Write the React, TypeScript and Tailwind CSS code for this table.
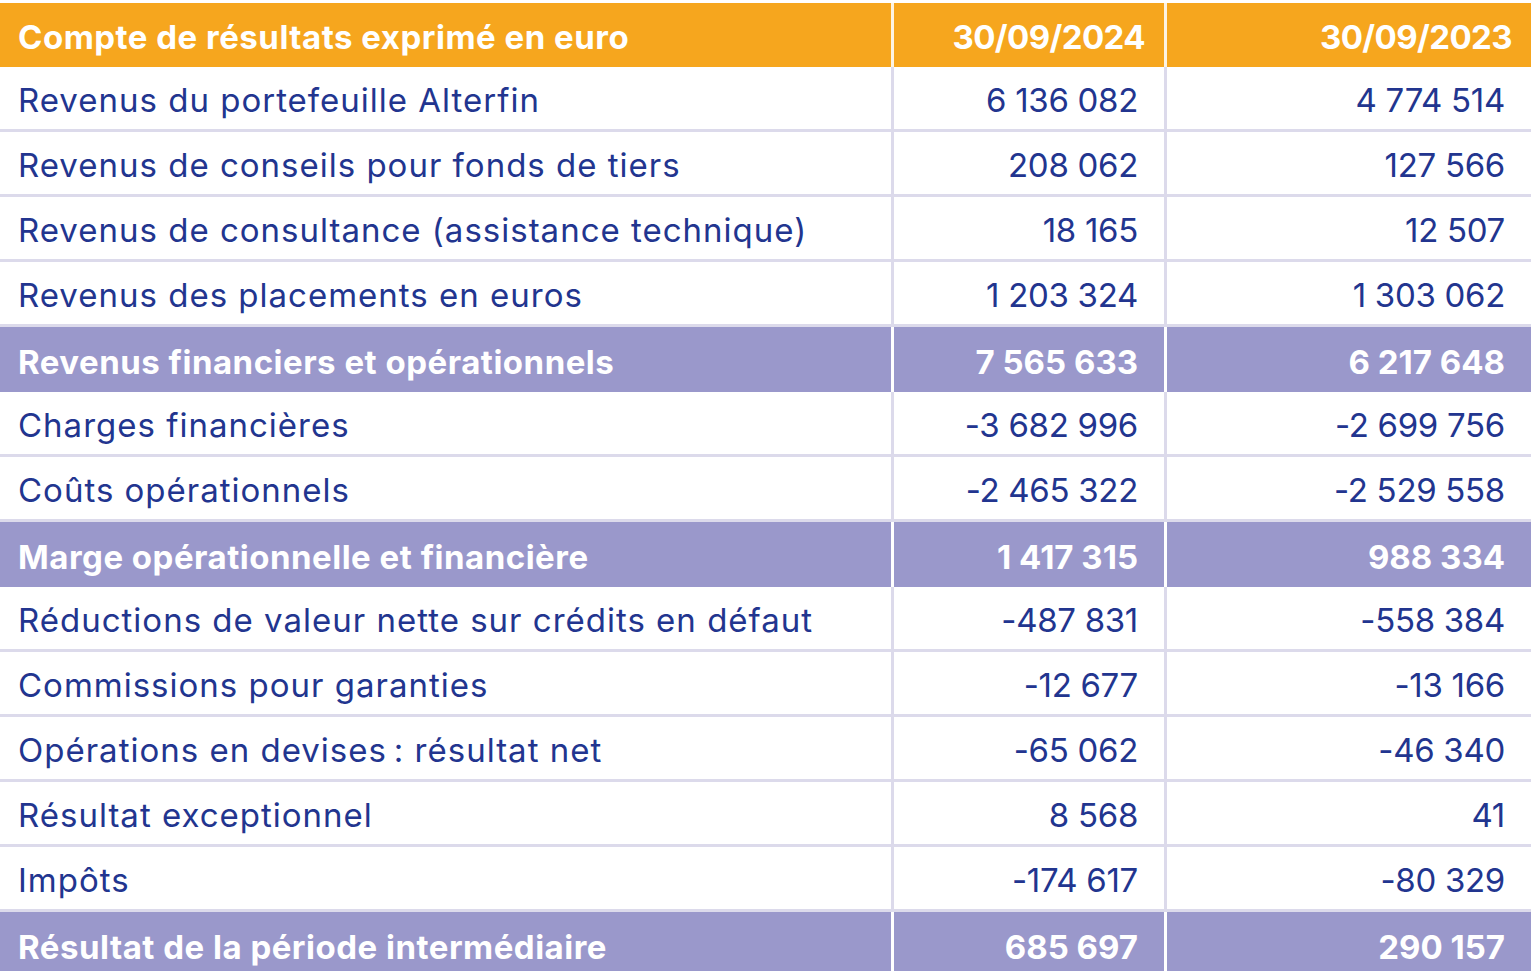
const rows: { label: string; a: string; b: string; total?: boolean }[] = [
  { label: "Revenus du portefeuille Alterfin", a: "6 136 082", b: "4 774 514" },
  { label: "Revenus de conseils pour fonds de tiers", a: "208 062", b: "127 566" },
  { label: "Revenus de consultance (assistance technique)", a: "18 165", b: "12 507" },
  { label: "Revenus des placements en euros", a: "1 203 324", b: "1 303 062" },
  { label: "Revenus financiers et opérationnels", a: "7 565 633", b: "6 217 648", total: true },
  { label: "Charges financières", a: "-3 682 996", b: "-2 699 756" },
  { label: "Coûts opérationnels", a: "-2 465 322", b: "-2 529 558" },
  { label: "Marge opérationnelle et financière", a: "1 417 315", b: "988 334", total: true },
  { label: "Réductions de valeur nette sur crédits en défaut", a: "-487 831", b: "-558 384" },
  { label: "Commissions pour garanties", a: "-12 677", b: "-13 166" },
  { label: "Opérations en devises\u202f: résultat net", a: "-65 062", b: "-46 340" },
  { label: "Résultat exceptionnel", a: "8 568", b: "41" },
  { label: "Impôts", a: "-174 617", b: "-80 329" },
  { label: "Résultat de la période intermédiaire", a: "685 697", b: "290 157", total: true },
];

export default function App() {
  return (
    <main className="min-h-screen bg-white pt-[3px] font-['Inter',sans-serif] text-[33px] text-[#22358f]">
      <div className="grid h-[64px] grid-cols-[891px_273px_1fr] bg-[#f6a61e] font-bold text-white">
        <div className="flex items-center pl-[18px] pt-[6px] tracking-[0.5px]">Compte de résultats exprimé en euro</div>
        <div className="flex items-center justify-end border-l-[3px] border-[#fdf3e2] pr-[19px] pt-[6px] tracking-[-0.6px]">30/09/2024</div>
        <div className="flex items-center justify-end border-l-[3px] border-[#fdf3e2] pr-[19px] pt-[6px] tracking-[-0.6px]">30/09/2023</div>
      </div>

      {rows.map((row) =>
        row.total ? (
          <div key={row.label} className="grid h-[65px] grid-cols-[891px_273px_1fr] bg-[#9a98cb] font-bold text-white">
            <div className="flex items-center pl-[18px] pt-[6px] tracking-[0.5px]">{row.label}</div>
            <div className="flex items-center justify-end border-l-[3px] border-white pr-[26px] pt-[6px]">{row.a}</div>
            <div className="flex items-center justify-end border-l-[3px] border-white pr-[26px] pt-[6px]">{row.b}</div>
          </div>
        ) : (
          <div key={row.label} className="grid h-[65px] grid-cols-[891px_273px_1fr] border-b-[3px] border-[#dcdaeb]">
            <div className="flex items-center pl-[18px] pt-[6px] tracking-[1px]">{row.label}</div>
            <div className="flex items-center justify-end border-l-[3px] border-[#dcdaeb] pr-[26px] pt-[6px] tracking-[-0.3px]">{row.a}</div>
            <div className="flex items-center justify-end border-l-[3px] border-[#dcdaeb] pr-[26px] pt-[6px] tracking-[-0.3px]">{row.b}</div>
          </div>
        )
      )}
    </main>
  );
}
